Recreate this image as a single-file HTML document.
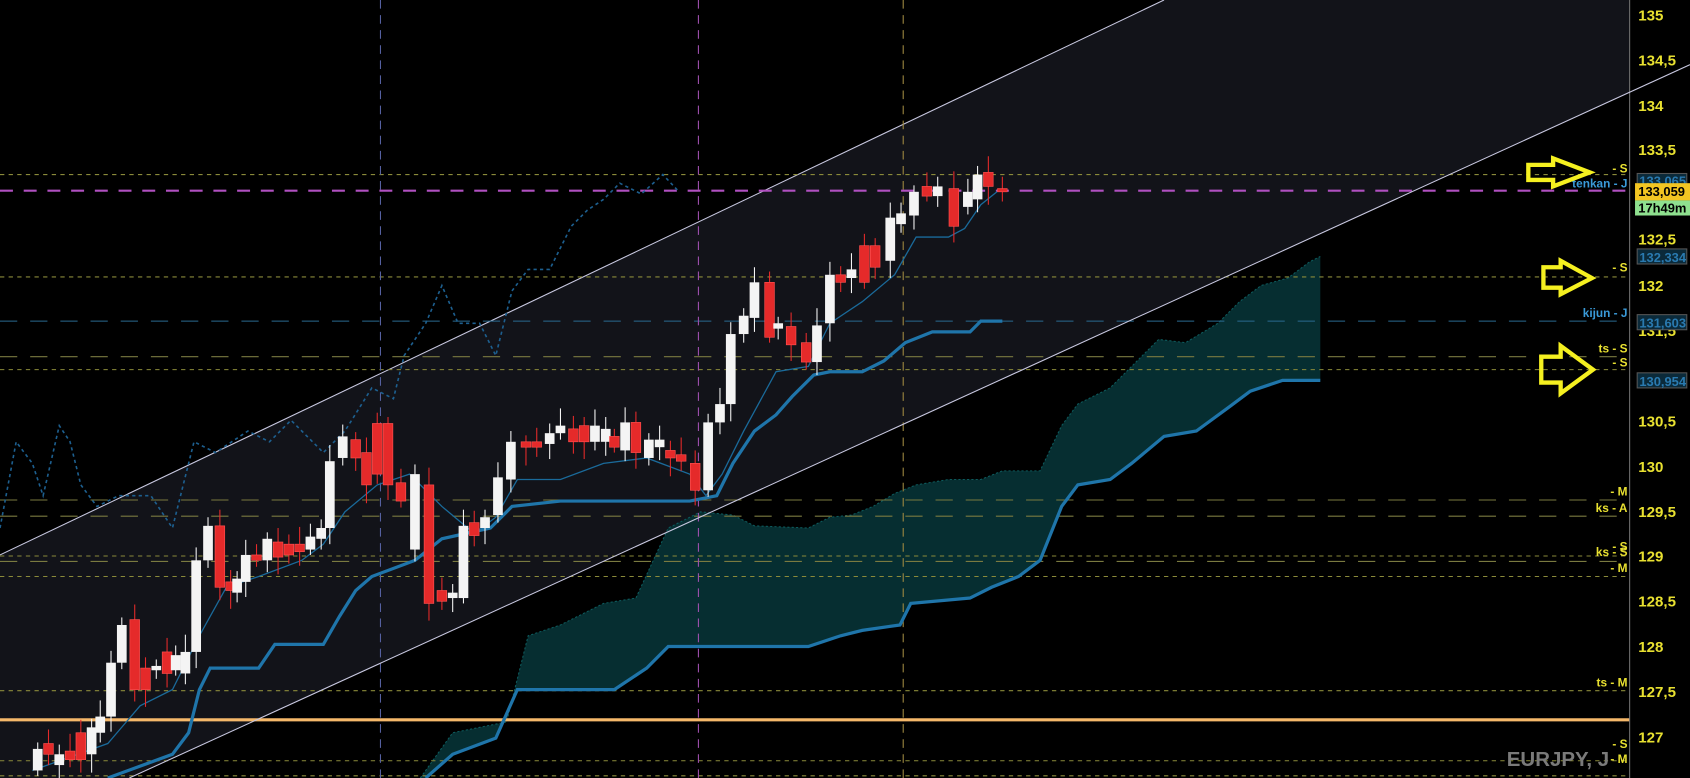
<!DOCTYPE html>
<html><head><meta charset="utf-8"><style>
html,body{margin:0;padding:0;background:#000;overflow:hidden}
svg{display:block}
text{font-family:"Liberation Sans",sans-serif;font-weight:bold}
</style></head><body>
<svg id="s" width="1690" height="778" viewBox="0 0 1568 722" preserveAspectRatio="none" xmlns="http://www.w3.org/2000/svg">
<rect width="1568" height="722" fill="#000"/>
<polygon points="0,515 1080,0 1512,0 1512,86 120,722 0,722" fill="#121319"/>
<!-- cloud -->
<polygon fill="#062e31" points="390,722 420,680 470,670 490,590 520,580 560,560 590,555 620,490 650,475 680,478 700,488 750,490 770,480 790,478 810,470 830,458 850,450 880,445 910,445 930,437 965,437 985,395 1000,375 1030,360 1050,340 1075,315 1100,318 1130,300 1150,280 1170,265 1195,258 1215,243 1225,238 1225,353 1190,353 1160,363 1140,378 1110,400 1080,405 1050,430 1030,445 1000,450 985,470 965,520 945,535 920,545 900,555 845,560 835,580 800,585 780,590 750,600 620,600 600,620 570,640 480,640 460,685 420,700 395,722"/>
<polyline fill="none" stroke="#0d5a5c" stroke-width="1" stroke-dasharray="2,2" points="390,722 420,680 470,670 490,590 520,580 560,560 590,555 620,490 650,475 680,478 700,488 750,490 770,480 790,478 810,470 830,458 850,450 880,445 910,445 930,437 965,437 985,395 1000,375 1030,360 1050,340 1075,315 1100,318 1130,300 1150,280 1170,265 1195,258 1215,243 1225,238"/>
<line x1="0" y1="515" x2="1080" y2="0" stroke="#c8c8e0" stroke-width="1"/>
<g stroke-width="1" fill="none">
<line x1="0" y1="162" x2="1512" y2="162" stroke="#8a8a3a" stroke-dasharray="4,4"/>
<line x1="0" y1="257" x2="1512" y2="257" stroke="#8a8a3a" stroke-dasharray="4,4"/>
<line x1="0" y1="298" x2="1512" y2="298" stroke="#2a6a90" stroke-dasharray="16,12"/>
<line x1="0" y1="331" x2="1512" y2="331" stroke="#7a7a40" stroke-dasharray="16,12"/>
<line x1="0" y1="343" x2="1512" y2="343" stroke="#8a8a3a" stroke-dasharray="4,4"/>
<line x1="0" y1="464" x2="1512" y2="464" stroke="#7a7a40" stroke-dasharray="16,12"/>
<line x1="0" y1="479" x2="1512" y2="479" stroke="#7a7a40" stroke-dasharray="16,12"/>
<line x1="0" y1="516" x2="1512" y2="516" stroke="#8a8a3a" stroke-dasharray="4,4"/>
<line x1="0" y1="521" x2="1512" y2="521" stroke="#7a7a40" stroke-dasharray="16,12"/>
<line x1="0" y1="535" x2="1512" y2="535" stroke="#8a8a3a" stroke-dasharray="4,4"/>
<line x1="0" y1="641" x2="1512" y2="641" stroke="#8a8a3a" stroke-dasharray="4,4"/>
<line x1="0" y1="706" x2="1512" y2="706" stroke="#8a8a3a" stroke-dasharray="4,4"/>
<line x1="0" y1="720" x2="1512" y2="720" stroke="#8a8a3a" stroke-dasharray="4,4"/>
<line x1="353" y1="0" x2="353" y2="722" stroke="#5560a0" stroke-dasharray="8,6"/>
<line x1="648" y1="0" x2="648" y2="722" stroke="#a050b0" stroke-dasharray="8,6"/>
<line x1="838" y1="0" x2="838" y2="722" stroke="#a08a40" stroke-dasharray="8,6"/>
<line x1="0" y1="177" x2="1512" y2="177" stroke="#b050c0" stroke-width="2" stroke-dasharray="12,10"/>
</g>
<line x1="0" y1="668" x2="1512" y2="668" stroke="#f5b86a" stroke-width="3"/>
<polyline fill="none" stroke="#1d5f8f" stroke-width="1.5" stroke-dasharray="3,3" points="0,490 15,410 30,430 40,460 55,395 65,410 75,450 90,470 110,460 140,460 160,490 180,410 200,420 230,400 250,410 270,390 300,420 320,400 345,360 365,370 375,330 395,300 410,265 425,300 445,300 460,330 475,270 490,250 510,250 530,210 545,195 560,185 575,170 595,180 615,162 630,178"/>
<polyline fill="none" stroke="#1f75aa" stroke-width="3" points="100,722 160,700 175,680 185,640 195,620 240,620 255,598 300,598 315,572 330,548 345,535 385,520 395,512 410,500 455,490 475,470 520,465 640,465 665,460 680,430 700,400 720,385 735,368 755,348 770,345 800,345 820,335 840,318 865,308 900,308 910,298 930,298"/>
<polyline fill="none" stroke="#1f75aa" stroke-width="3" points="1225,353 1190,353 1160,363 1140,378 1110,400 1080,405 1050,430 1030,445 1000,450 985,470 965,520 945,535 920,545 900,555 845,560 835,580 800,585 780,590 750,600 620,600 600,620 570,640 480,640 460,685 420,700 395,722"/>
<polyline fill="none" stroke="#1a6a9a" stroke-width="1.2" points="30,715 100,690 130,655 160,640 185,590 210,545 240,535 280,520 300,505 320,475 350,450 380,440 410,470 440,495 460,480 480,445 520,445 560,430 600,425 640,440 655,460 670,440 690,400 720,345 750,340 770,300 800,280 830,255 850,220 880,220 895,212 910,190 925,178"/>
<g id="c"></g>
<rect x="1512" y="0" width="56" height="722" fill="#000"/>
<line x1="1512" y1="0" x2="1512" y2="722" stroke="#707070"/>
<line x1="120" y1="722" x2="1568" y2="60" stroke="#c8c8e0" stroke-width="1"/>
<g fill="#e8e030" font-size="14">
<text x="1520" y="19">135</text><text x="1520" y="61">134,5</text><text x="1520" y="103">134</text><text x="1520" y="144">133,5</text>
<text x="1520" y="227">132,5</text><text x="1520" y="270">132</text><text x="1520" y="312">131,5</text><text x="1520" y="396">130,5</text>
<text x="1520" y="438">130</text><text x="1520" y="480">129,5</text><text x="1520" y="521">129</text><text x="1520" y="563">128,5</text>
<text x="1520" y="605">128</text><text x="1520" y="647">127,5</text><text x="1520" y="689">127</text>
</g>
<g font-size="12">
<rect x="1519" y="161" width="46" height="12" fill="#0b2a3a" stroke="#555"/><text x="1521" y="172" fill="#2a7ab0">133,065</text>
<rect x="1517" y="170" width="51" height="16" fill="#f2c522"/><text x="1520" y="182" fill="#000">133,059</text>
<rect x="1517" y="186" width="51" height="14" fill="#8fe08f"/><text x="1520" y="197" fill="#000" font-weight="normal">17h49m</text>
<rect x="1519" y="231" width="46" height="14" fill="#0b2a3a" stroke="#555"/><text x="1521" y="243" fill="#2a7ab0">132,334</text>
<rect x="1519" y="292" width="46" height="14" fill="#0b2a3a" stroke="#555"/><text x="1521" y="304" fill="#2a7ab0">131,603</text>
<rect x="1519" y="346" width="46" height="14" fill="#0b2a3a" stroke="#555"/><text x="1521" y="358" fill="#2a7ab0">130,954</text>
</g>
<g font-size="11" fill="#e8e030" text-anchor="end">
<text x="1510" y="160">- S</text><text x="1510" y="252">- S</text>
<text x="1510" y="327">ts - S</text><text x="1510" y="340">- S</text>
<text x="1510" y="460">- M</text><text x="1510" y="475">ks - A</text>
<text x="1510" y="511">- S</text><text x="1510" y="516">ks - S</text><text x="1510" y="531">- M</text>
<text x="1510" y="637">ts - M</text><text x="1510" y="694">- S</text><text x="1510" y="708">- M</text>
</g>
<g font-size="11" fill="#3a9ad8" text-anchor="end">
<text x="1510" y="174">tenkan - J</text><text x="1510" y="294">kijun - J</text>
</g>
<text x="1398" y="711" font-size="19" fill="#7a7a7a" font-weight="bold">EURJPY, J</text>
<g fill="none" stroke="#f5f020" stroke-width="4" stroke-linejoin="miter">
<polygon points="1418,153 1441,153 1441,147 1475,160 1441,173 1441,167 1418,167"/>
<polygon points="1432,248 1448,248 1448,242 1477,258 1448,273 1448,267 1432,267"/>
<polygon points="1430,331 1448,331 1448,321 1478,343 1448,365 1448,355 1430,355"/>
</g>
</svg>
<script>
var C=[[35,695,715,1],[45,690,700,0],[55,700,710,1],[65,697,705,0],[75,680,705,0],[85,675,700,1],[93,665,680,1],[103,615,665,1],[113,580,615,1],[125,575,640,0],[135,620,640,0],[145,618,622,1],[155,605,625,0],[163,608,622,1],[172,605,625,1],[182,520,605,1],[193,488,520,1],[204,488,545,0],[214,540,548,0],[220,537,550,1],[228,515,540,1],[238,515,520,0],[248,500,520,1],[258,503,517,0],[268,505,515,0],[278,505,512,0],[288,498,510,1],[298,490,500,1],[306,428,490,1],[318,405,425,1],[330,408,425,0],[340,420,450,0],[350,393,440,0],[360,393,450,0],[372,448,465,0],[385,440,510,1],[398,450,560,0],[410,548,558,0],[420,550,555,1],[430,488,555,1],[440,485,497,0],[450,480,490,1],[462,443,478,1],[474,410,445,1],[488,410,415,0],[498,410,415,0],[510,402,412,1],[520,395,402,1],[532,398,410,0],[542,395,410,0],[552,395,410,1],[562,398,410,1],[570,405,415,0],[580,392,418,1],[590,392,420,0],[602,408,425,1],[612,408,415,1],[622,418,425,0],[632,422,428,0],[645,430,455,0],[657,392,455,1],[668,375,392,1],[678,310,375,1],[690,293,310,1],[700,262,295,1],[714,262,313,0],[722,300,305,1],[734,303,320,0],[748,318,336,0],[758,302,336,1],[770,255,300,1],[780,255,262,0],[790,250,258,1],[802,228,262,0],[812,228,248,0],[826,202,242,1],[836,198,208,1],[848,178,200,1],[860,173,182,0],[870,173,182,1],[885,175,210,0],[898,178,192,1],[907,162,185,1],[917,160,173,0],[930,175,178,0]];
var g=document.getElementById('c'),h='';
C.forEach(function(c,i){var a=c[1],b=c[2],up=c[3];var hi=a-6-(i*7%11),lo=b+5+(i*5%13);
var col=up?'#f4f4f4':'#e52a2a';
h+='<line x1="'+c[0]+'" y1="'+hi+'" x2="'+c[0]+'" y2="'+lo+'" stroke="'+col+'" stroke-width="1"/>';
h+='<rect x="'+(c[0]-4.5)+'" y="'+a+'" width="9" height="'+Math.max(2,b-a)+'" fill="'+col+'"'+(up?'':' stroke="#ff5050" stroke-width="0.6"')+'/>';});
g.innerHTML=h;
</script>
</body></html>
